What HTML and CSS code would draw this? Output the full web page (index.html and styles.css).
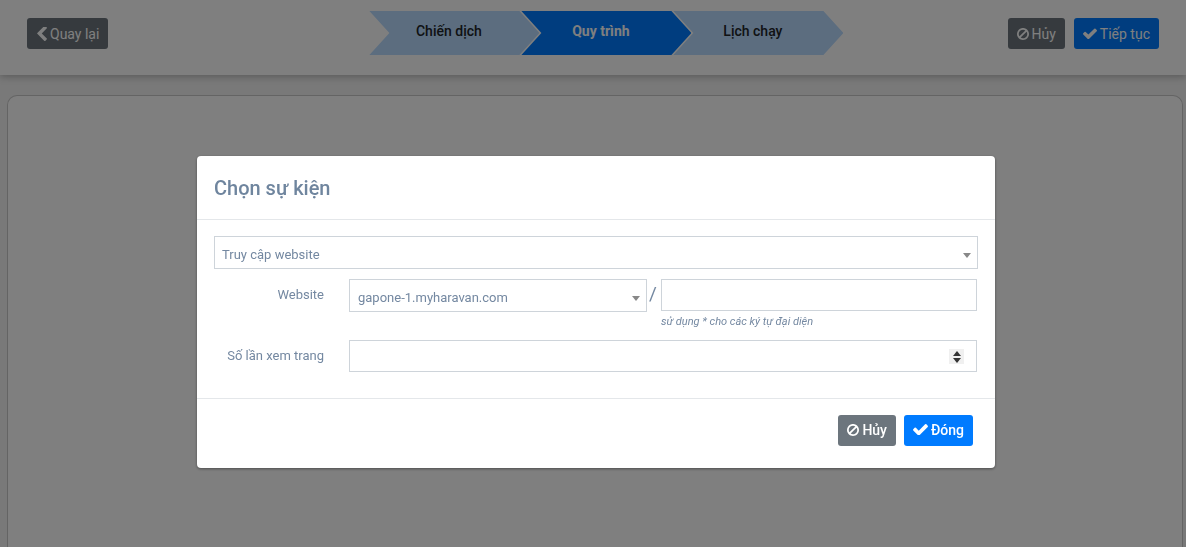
FILE: index.html
```html
<!DOCTYPE html>
<html lang="vi">
<head>
<meta charset="utf-8">
<title>Chọn sự kiện</title>
<link rel="stylesheet" href="styles.css">
</head>
<body>
<header class="topbar">
  <button class="btn btn-gray btn-back" type="button"><svg class="ico ico-back" viewBox="290 192 1156 1408"><path d="M1427 301l-531 531 531 531q19 19 19 45t-19 45l-166 166q-19 19-45 19t-45-19l-742-742q-19-19-19-45t19-45l742-742q19-19 45-19t45 19l166 166q19 19 19 45t-19 45z"/></svg>Quay lại</button>
  <nav class="steps">
    <div class="step">Chiến dịch</div>
    <div class="step step-active">Quy trình</div>
    <div class="step">Lịch chạy</div>
  </nav>
  <div class="top-actions">
    <button class="btn btn-gray" type="button"><svg class="ico ico-ban" viewBox="128 128 1536 1536"><path d="M1440 893q0-161-87-295l-754 753q137 89 297 89 111 0 211.5-43.5t173.5-116.5 116-174.5 43-212.5zm-999 299l755-754q-135-91-300-91-148 0-273 73t-198 199-73 274q0 162 89 299zm1223-299q0 157-61 300t-163.5 246-245 164-298.5 61-298.5-61-245-164-163.5-246-61-300 61-299.5 163.5-245.5 245-164 298.5-61 298.5 61 245 164 163.5 245.5 61 299.5z"/></svg>Hủy</button>
    <button class="btn btn-blue" type="button"><svg class="ico ico-check" viewBox="121 330 1550 1130"><path d="M1671 566q0 40-28 68l-724 724-136 136q-28 28-68 28t-68-28l-136-136-362-362q-28-28-28-68t28-68l136-136q28-28 68-28t68 28l294 295 656-657q28-28 68-28t68 28l136 136q28 28 28 68z"/></svg>Tiếp tục</button>
  </div>
</header>
<main class="content"><div class="panel"></div></main>

<div class="backdrop"></div>
<div class="modal-wrap">
  <section class="modal">
    <h2 class="modal-title">Chọn sự kiện</h2>
    <div class="modal-body">
      <div class="select select-full"><span>Truy cập website</span><i class="caret"></i></div>
      <div class="row row-site">
        <label class="label">Website</label>
        <div class="select select-site"><span>gapone-1.myharavan.com</span><i class="caret"></i></div>
        <span class="slash">/</span>
        <div class="path">
          <input class="input" type="text">
          <small class="hint">sử dụng * cho các ký tự đại diện</small>
        </div>
      </div>
      <div class="row">
        <label class="label">Số lần xem trang</label>
        <div class="number">
          <input class="input" type="text">
          <span class="spin"><i class="up"></i><i class="down"></i></span>
        </div>
      </div>
    </div>
    <footer class="modal-foot">
      <button class="btn btn-gray btn-strong" type="button"><svg class="ico ico-ban" viewBox="128 128 1536 1536"><path d="M1440 893q0-161-87-295l-754 753q137 89 297 89 111 0 211.5-43.5t173.5-116.5 116-174.5 43-212.5zm-999 299l755-754q-135-91-300-91-148 0-273 73t-198 199-73 274q0 162 89 299zm1223-299q0 157-61 300t-163.5 246-245 164-298.5 61-298.5-61-245-164-163.5-246-61-300 61-299.5 163.5-245.5 245-164 298.5-61 298.5 61 245 164 163.5 245.5 61 299.5z"/></svg>Hủy</button>
      <button class="btn btn-blue btn-strong" type="button"><svg class="ico ico-check" viewBox="121 330 1550 1130"><path d="M1671 566q0 40-28 68l-724 724-136 136q-28 28-68 28t-68-28l-136-136-362-362q-28-28-28-68t28-68l136-136q28-28 68-28t68 28l294 295 656-657q28-28 68-28t68 28l136 136q28 28 28 68z"/></svg>Đóng</button>
    </footer>
  </section>
</div>
</body>
</html>
```
FILE: styles.css
```css
* { box-sizing: border-box; }
html, body { height: 100%; }
body {
  margin: 0;
  overflow: hidden;
  background: #f2f2f2;
  color: #212529;
  font-family: Roboto, "Liberation Sans", sans-serif;
  font-size: 13px;
}
.topbar {
  height: 75px;
  padding: 0 27px;
  display: flex;
  align-items: flex-start;
  background: #fff;
  box-shadow: 0 1px 8px rgba(0, 0, 0, .3);
  position: relative;
}
.btn {
  height: 31px;
  padding: 0 9px;
  display: inline-flex;
  align-items: center;
  gap: 3px;
  border: 0;
  border-radius: 3px;
  color: #fff;
  font-family: inherit;
  font-size: 14px;
  line-height: 1;
}
.btn-gray { background: #6c757d; }
.btn-blue { background: #007bff; }
.btn-strong { font-weight: 500; padding-bottom: 2px; }
.ico { fill: currentColor; flex: none; }
.ico-back { width: 11px; height: 14px; }
.ico-ban { width: 12px; height: 12px; }
.ico-check { width: 14px; height: 11px; }
.btn-strong .ico-check { width: 15px; height: 11px; }
.btn-back { margin-top: 18px; }
.steps {
  display: flex;
  margin: 11px 0 0 261px;
}
.step {
  width: 170px;
  height: 44px;
  margin-right: -18px;
  padding: 0 11px 4px 0;
  display: flex;
  align-items: center;
  justify-content: center;
  background: #b8daff;
  font-size: 14px;
  font-weight: 500;
  clip-path: polygon(0 0, 150px 0, 100% 50%, 150px 100%, 0 100%, 20px 50%);
}
.step-active { background: #007bff; color: #fff; font-weight: 700; }
.top-actions { display: flex; gap: 9px; margin: 18px 0 0 auto; }
.content { padding: 20px 3px 0 7px; }
.panel {
  height: 452px;
  background: #fff;
  border: 1px solid #c8c8c8;
  border-bottom: 0;
  border-radius: 10px 10px 0 0;
}
.backdrop {
  position: fixed;
  inset: 0;
  background: rgba(0, 0, 0, .5);
}
.modal-wrap {
  position: fixed;
  inset: 0;
  padding: 156px 0 0 197px;
}
.modal {
  width: 798px;
  height: 312px;
  background: #fff;
  border-radius: 4px;
  box-shadow: 0 1px 3px rgba(0, 0, 0, .4);
  color: #7488a1;
}
.modal-title {
  margin: 0;
  height: 64px;
  padding: 20px 17px 0;
  border-bottom: 1px solid #e4e7ea;
  font-size: 20px;
  line-height: 24px;
  font-weight: 500;
  color: #6f859e;
}
.modal-body {
  height: 179px;
  padding: 16px 17px 0;
  border-bottom: 1px solid #e4e7ea;
}
.select {
  position: relative;
  display: flex;
  align-items: center;
  border: 1px solid #ced4da;
  padding: 4px 7px 0;
  font-size: 13px;
}
.select-full { height: 33px; width: 764px; }
.select-site { height: 33px; width: 298px; padding-left: 8px; }
.caret {
  position: absolute;
  right: 6px;
  top: 16px;
  border-style: solid;
  border-width: 5px 4px 0;
  border-color: #888 transparent transparent;
}
.row { display: flex; align-items: flex-start; }
.row-site { margin-top: 10px; }
.label {
  width: 110px;
  margin-right: 25px;
  padding-top: 1px;
  text-align: right;
  font-size: 13px;
  line-height: 30px;
}
.slash {
  width: 14px;
  padding-right: 2px;
  text-align: center;
  font-size: 19px;
  line-height: 29px;
}
.path { width: 316px; }
.input {
  display: block;
  width: 100%;
  height: 32px;
  border: 1px solid #ced4da;
  padding: 0 8px;
  background: #fff;
  border-radius: 0;
  outline: 0;
}
.hint {
  display: block;
  margin-top: 4px;
  height: 25px;
  font-size: 11px;
  font-style: italic;
  line-height: 13px;
}
.number { position: relative; width: 628px; }
.spin {
  position: absolute;
  right: 13px;
  top: 9px;
  width: 15px;
  height: 15px;
  background: #f0f0f0;
  display: flex;
  flex-direction: column;
  align-items: center;
  justify-content: center;
  gap: 2px;
}
.up, .down { border-style: solid; border-color: transparent; }
.up { border-width: 0 4px 5px; border-bottom-color: #333; }
.down { border-width: 5px 4px 0; border-top-color: #333; }
.modal-foot {
  display: flex;
  justify-content: flex-end;
  gap: 8px;
  padding: 16px 22px 0 0;
}
```
